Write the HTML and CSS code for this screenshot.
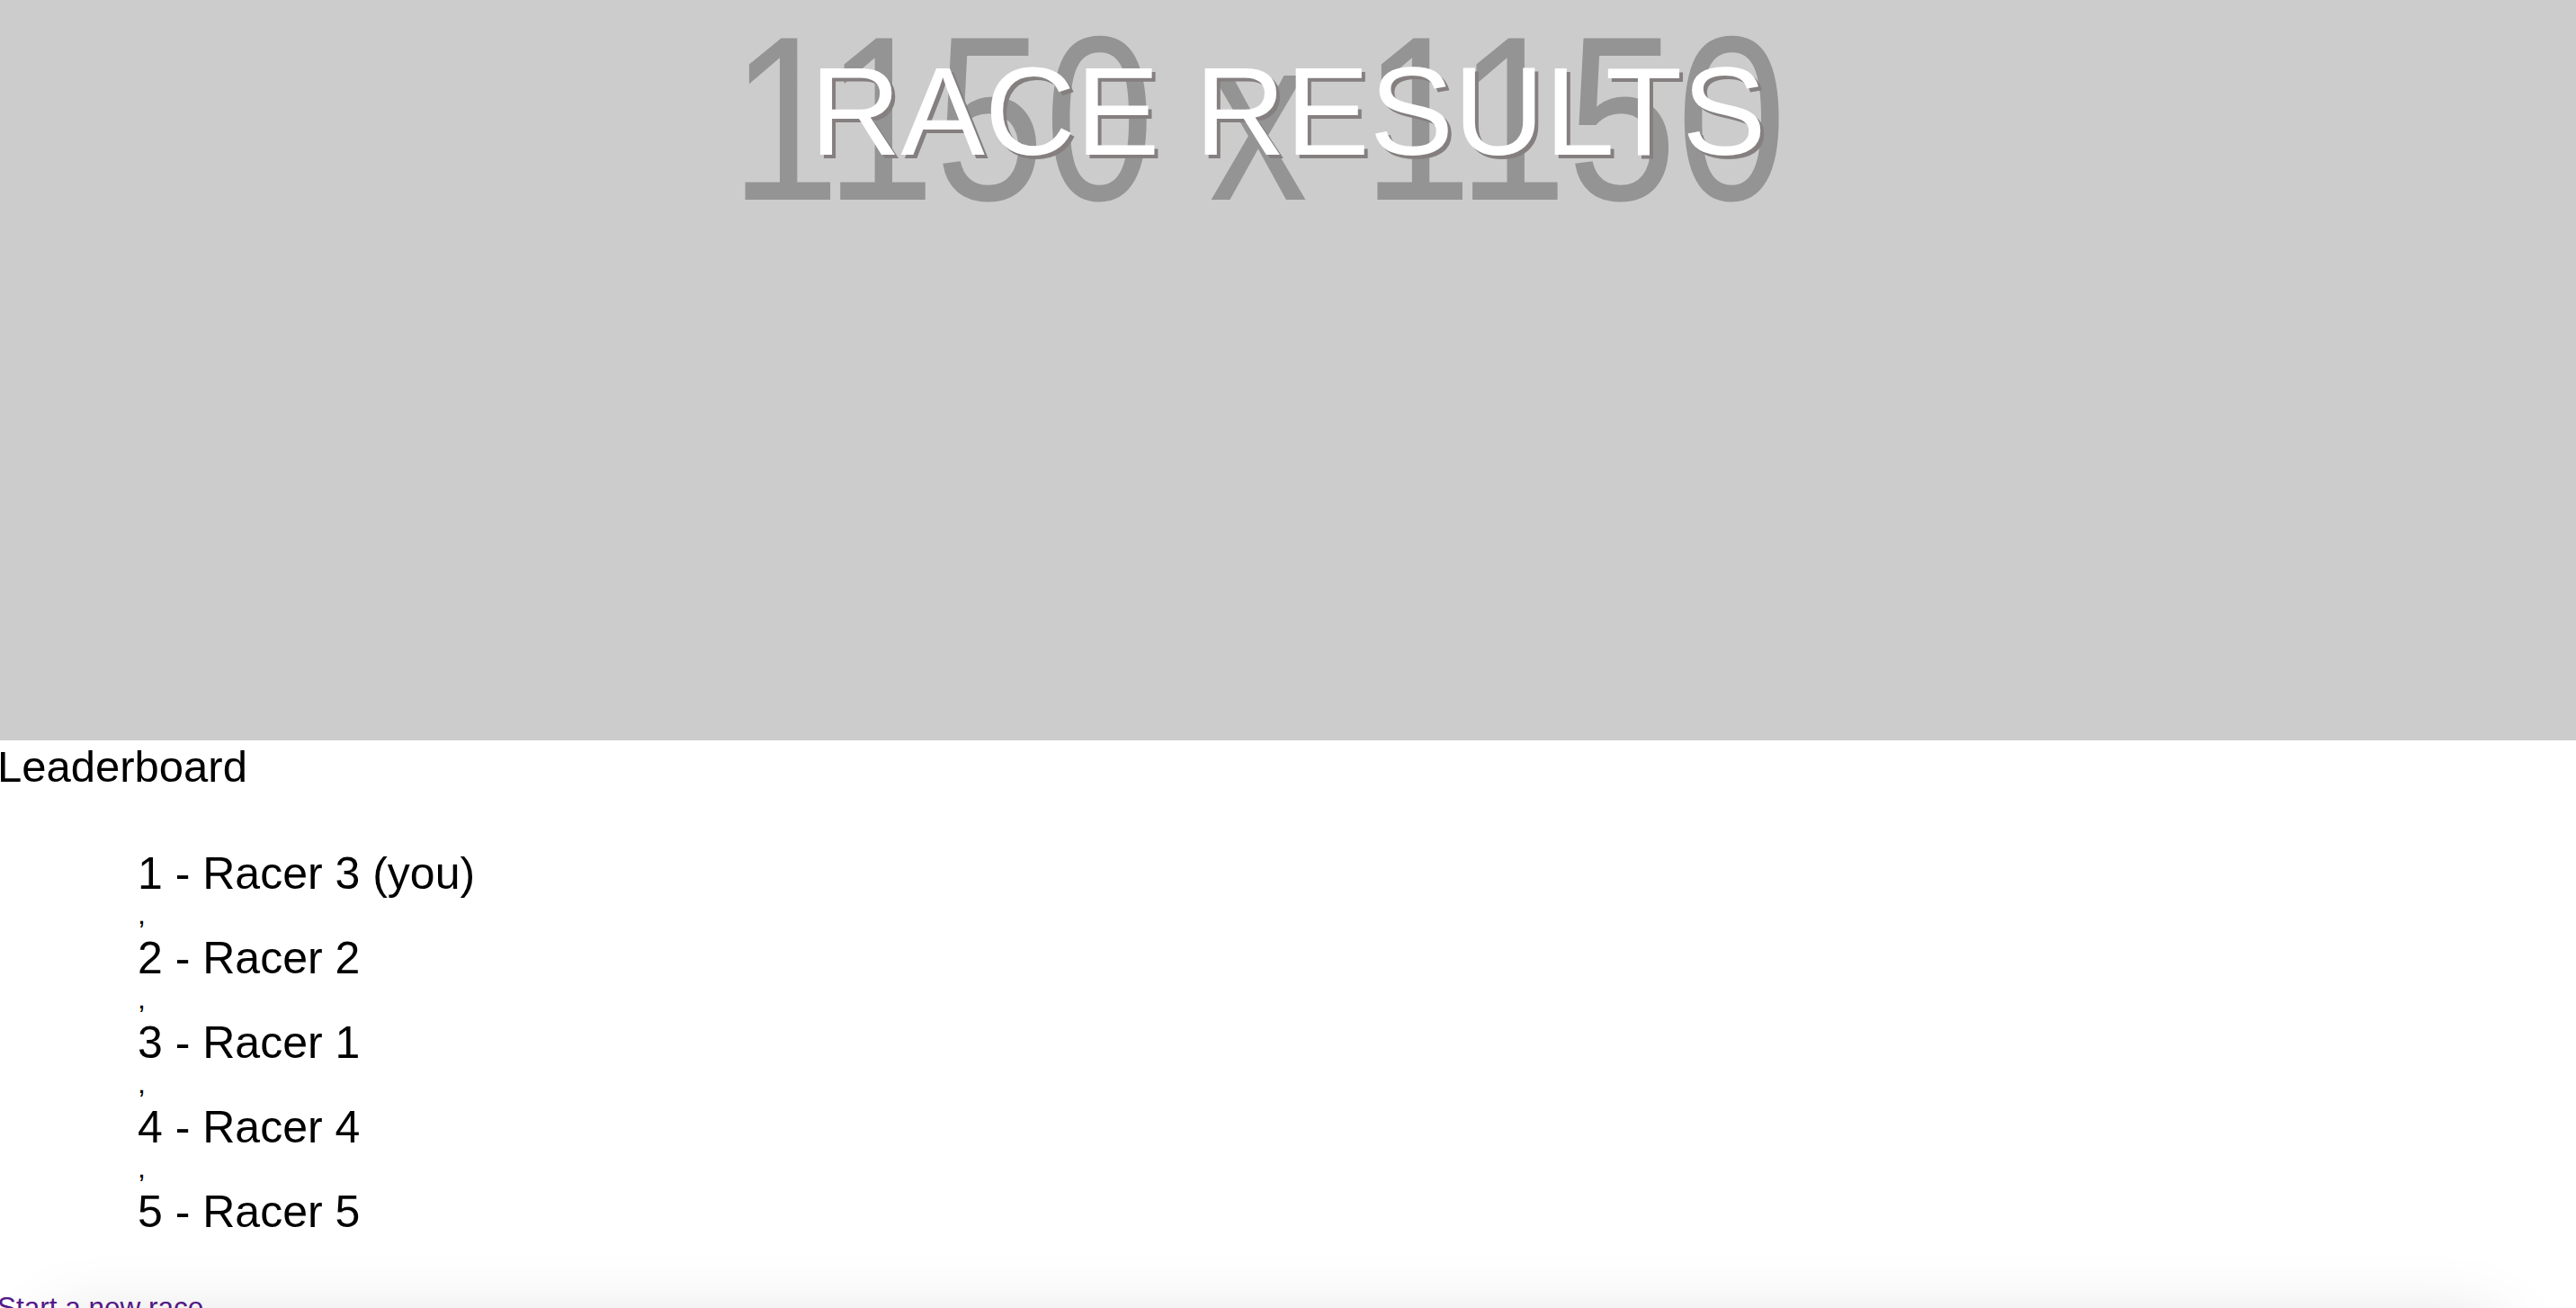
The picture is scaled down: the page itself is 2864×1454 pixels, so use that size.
FILE: index.html
```html
<!DOCTYPE html>
<html lang="en">
<head>
<meta charset="utf-8">
<title>Race Results</title>
<link rel="stylesheet" href="styles.css">
</head>
<body>
  <div class="page">
    <header class="hero">
      <div class="hero-placeholder" aria-hidden="true">1150 x 1150</div>
      <h1 class="hero-title">RACE RESULTS</h1>
    </header>
    <section class="board">
      <h2 class="board-title">Leaderboard</h2>
      <div class="board-list">
        <div class="board-item">1 - Racer 3 (you)</div>
        <div class="board-sep">,</div>
        <div class="board-item">2 - Racer 2</div>
        <div class="board-sep">,</div>
        <div class="board-item">3 - Racer 1</div>
        <div class="board-sep">,</div>
        <div class="board-item">4 - Racer 4</div>
        <div class="board-sep">,</div>
        <div class="board-item">5 - Racer 5</div>
      </div>
      <a class="new-race" href="#">Start a new race</a>
    </section>
    <div class="footer-panel"></div>
  </div>
</body>
</html>
```

FILE: styles.css
```css
html, body {
  margin: 0;
  padding: 0;
  background: #ffffff;
}

body {
  font-family: "Liberation Sans", Arial, Helvetica, sans-serif;
  color: #000000;
  overflow: hidden;
}

.page {
  display: flex;
  flex-direction: column;
}

.hero {
  display: grid;
  height: 823px;
  background: #cccccc;
  overflow: hidden;
}

.hero-placeholder {
  grid-area: 1 / 1;
  z-index: 0;
  justify-self: center;
  align-self: start;
  margin-top: 1px;
  font-size: 261px;
  line-height: 1;
  color: #949494;
  white-space: nowrap;
  transform: translateX(-33px) scaleX(0.84);
}

.hero-title {
  grid-area: 1 / 1;
  z-index: 1;
  justify-self: center;
  align-self: start;
  margin: 54px 0 0 0;
  font-size: 140px;
  font-weight: normal;
  line-height: 1;
  color: #ffffff;
  text-shadow: 4px 4px 0 #857f7f;
  white-space: nowrap;
}

.board {
  display: flex;
  flex-direction: column;
  align-items: flex-start;
  margin-left: -3px;
}

.board-title {
  margin: 0;
  padding-top: 1px;
  font-size: 49px;
  font-weight: normal;
  line-height: 56px;
}

.board-list {
  display: flex;
  flex-direction: column;
  margin-top: 63px;
  padding-left: 156px;
}

.board-item {
  font-size: 50px;
  line-height: 56px;
}

.board-sep {
  font-size: 32px;
  line-height: 38px;
  margin-top: -2px;
  margin-bottom: 2px;
}

.new-race {
  margin-top: 60px;
  font-size: 31.5px;
  line-height: 36px;
  color: #551a8b;
}

.footer-panel {
  height: 200px;
  margin: 0 90px 0 60px;
  background: #ffffff;
  box-shadow: 0 0 80px rgba(0, 0, 0, 0.15);
}
```
